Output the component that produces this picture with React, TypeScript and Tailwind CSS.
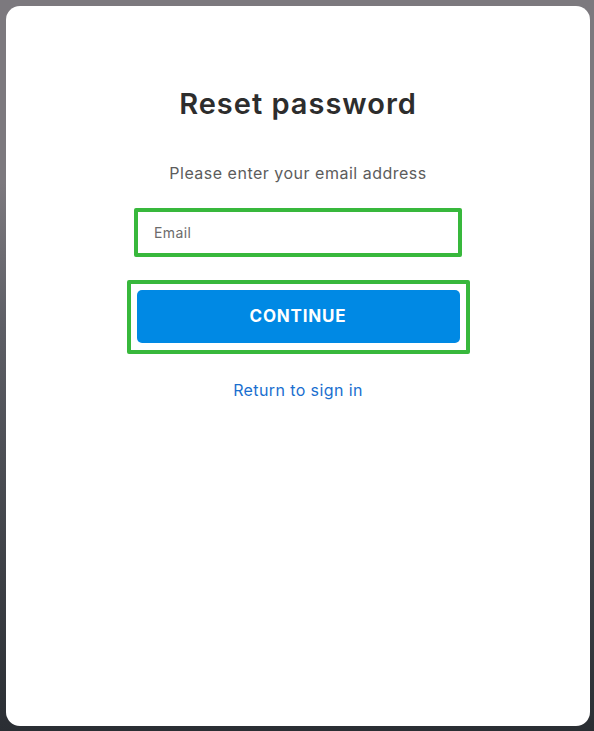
import React, { useState } from 'react';

const ResetPassword = () => {
  const [email, setEmail] = useState('');

  return (
    <div className="h-screen w-full pt-[6px] pl-[6px] pr-[4px] pb-[5px] bg-gradient-to-b from-[#7c797e] from-25% via-[#5d5e65] via-45% to-[#2a2e33]">
      {/* Card */}
      <div
        className="h-full w-full rounded-[14px] bg-white flex flex-col items-center"
        style={{ fontFamily: 'Inter, "Open Sans", sans-serif' }}
      >
        <h1 className="mt-[80px] text-[29px] leading-[36px] font-semibold text-[#2d2d2d] tracking-[1px]">
          Reset password
        </h1>
        <p className="mt-[40px] text-[16px] leading-[22px] text-[#5c5c5c] tracking-[0.5px]">
          Please enter your email address
        </p>

        {/* Email field */}
        <div className="mt-[24px] w-[328px] h-[49px] border-4 border-[#38b83c] rounded-[2px] bg-white flex items-center">
          <input
            type="email"
            placeholder="Email"
            value={email}
            onChange={(e) => setEmail(e.target.value)}
            className="w-full h-full px-[16px] text-[14px] tracking-[0.4px] text-[#333] placeholder:text-[#6b6b6b] outline-none bg-transparent"
          />
        </div>

        {/* Continue button */}
        <div className="mt-[23px] w-[343px] border-4 border-[#38b83c] rounded-[2px] pt-[6px] pb-[7px] px-[6px]">
          <button
            type="button"
            className="w-full h-[53px] rounded-[5px] bg-[#0089e4] text-white text-[17px] font-bold tracking-[0.8px]"
          >
            CONTINUE
          </button>
        </div>

        <a href="#" className="mt-[25px] text-[16px] leading-[22px] text-[#1a6fcf] tracking-[0.4px]">
          Return to sign in
        </a>
      </div>
    </div>
  );
};

export default ResetPassword;
